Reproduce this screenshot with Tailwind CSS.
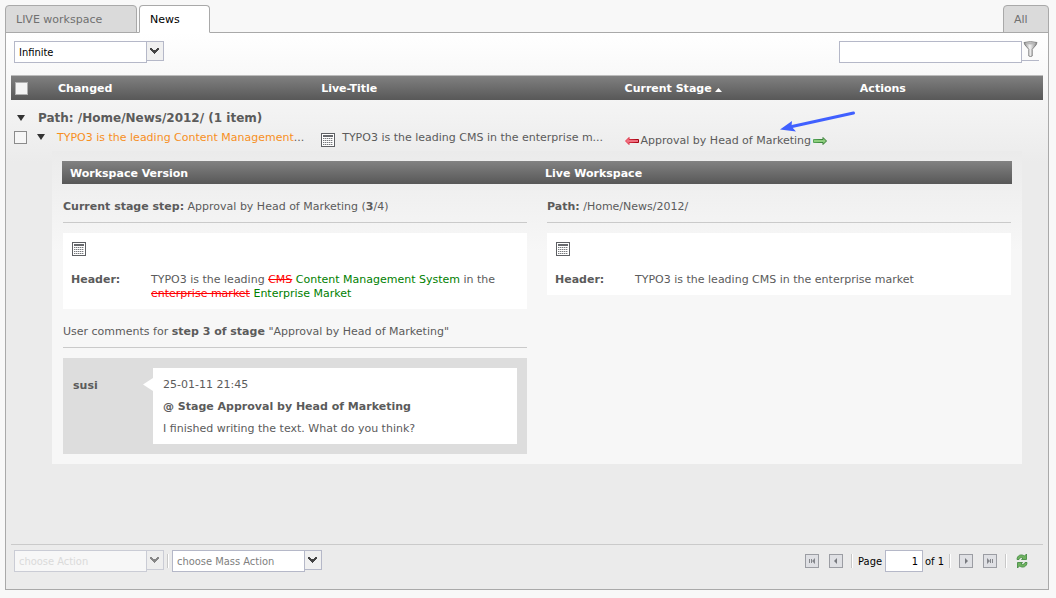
<!DOCTYPE html>
<html lang="en">
<head>
<meta charset="utf-8">
<title>Workspaces</title>
<script src="https://cdn.jsdelivr.net/npm/@tailwindcss/browser@4"></script>
</head>
<body class="min-h-screen flex flex-col bg-[#f8f8f8] pt-[5px] pl-[5px] pr-[7px] pb-2 font-['DejaVu_Sans',Verdana,sans-serif] text-[11px] leading-[14px] text-[#5b5b5b]">

<svg class="hidden" aria-hidden="true">
  <symbol id="record" viewBox="0 0 14 14">
    <rect x=".5" y=".5" width="13" height="13" fill="#fff" stroke="#5d5f63"/>
    <path d="M2 2.5h10M2 3.5h10" stroke="#686a6e"/>
    <path d="M2 5.5h10M2 7.5h10M2 9.5h10M2 11.5h10" stroke="#77797d" stroke-dasharray="1.4 .6"/>
  </symbol>
  <symbol id="chevron" viewBox="0 0 9 6">
    <path d="M0 0h2v1h1v1h3V1h1V0h2v2H8v1H7v1H6v1H5v1H4V5H3V4H2V3H1V2H0z" fill="currentColor"/>
  </symbol>
  <symbol id="caret" viewBox="0 0 8 6"><path d="M0 0h8L4 6z" fill="#333"/></symbol>
</svg>

<nav class="flex items-end gap-[2px] text-[#707070]" aria-label="Workspaces">
  <button class="h-7 w-[132px] rounded-t border border-[#a9a9a9] bg-[#dadada] pt-[2px] pl-[10px] text-left">LIVE workspace</button>
  <button class="relative z-10 h-7 w-[71px] rounded-t border border-[#a9a9a9] border-b-white bg-white pt-[2px] pl-[10px] text-left text-black">News</button>
  <button class="ml-auto h-7 w-[46px] rounded-t border border-[#a9a9a9] bg-[#dadada] pt-[2px] pl-[10px] text-left">All</button>
</nav>

<main class="relative -mt-px flex flex-1 flex-col border border-[#a9a9a9] bg-[#ebebeb] bg-[linear-gradient(#fff,#ebebeb_130px)] px-[5px] pb-[17px]">
  <div class="flex justify-between pt-2 pb-3 pl-[3px] pr-1 font-['DejaVu_Sans_Condensed',Tahoma,sans-serif]">
    <div class="flex items-start">
      <select aria-label="Depth" class="h-[22px] w-[133px] appearance-none border border-[#b5b8c8] bg-white px-1 pt-px text-black"><option>Infinite</option></select>
      <button aria-label="Open depth list" class="flex h-5 w-[17px] items-center justify-center border border-l-0 border-[#b5b8c8] bg-[#f0f0f0] pr-px text-[#444]"><svg class="h-[6px] w-[9px]"><use href="#chevron"/></svg></button>
    </div>
    <div class="flex items-start">
      <input type="text" aria-label="Filter" class="h-[22px] w-[183px] border border-[#b5b8c8] bg-white px-1 text-black">
      <button aria-label="Apply filter" class="flex h-5 w-[17px] items-start justify-center border-b border-[#b5b8c8]">
        <svg class="h-4 w-[15px]" viewBox="0 0 15 16">
          <defs><linearGradient id="metal"><stop stop-color="#8a8a8a"/><stop offset=".45" stop-color="#f4f4f4"/><stop offset="1" stop-color="#858585"/></linearGradient></defs>
          <path d="M1 1.500Q7.500-.2 14 1.500L13 4 9.200 8.300V15Q7.500 16 5.800 15V8.300L2 4z" fill="url(#metal)" stroke="#858585"/>
          <ellipse cx="7.500" cy="2.300" rx="4.800" ry="1.100" fill="#b8b8b8"/>
        </svg>
      </button>
    </div>
  </div>

  <table class="w-full table-fixed border-separate border-spacing-0 text-left">
    <colgroup><col class="w-[39px]"><col class="w-[25.5%]"><col class="w-[29.4%]"><col class="w-[22.8%]"><col></colgroup>
    <thead>
      <tr class="h-[25px] bg-linear-to-b from-[#828282] to-[#585858] text-white">
        <th class="border-t border-[#bcbcbc] p-0 pl-1 align-middle"><input type="checkbox" aria-label="Select all" class="block size-[13px] appearance-none border border-[#b0b0b0] bg-[#f4f4f4]"></th>
        <th class="border-t border-[#bcbcbc] px-2 pt-[2px] pb-0">Changed</th>
        <th class="border-t border-[#bcbcbc] px-2 pt-[2px] pb-0">Live-Title</th>
        <th class="border-t border-[#bcbcbc] px-2 pt-[2px] pb-0">Current Stage <svg class="inline-block h-1 w-[7px] align-[0px]" viewBox="0 0 7 4"><path d="M0 4h7L3.500 0z" fill="#fff"/></svg></th>
        <th class="border-t border-[#bcbcbc] px-2 pt-[2px] pb-0">Actions</th>
      </tr>
    </thead>
    <tbody>
      <tr class="h-[28px]">
        <th colspan="5" class="p-0 pt-2 pl-[6px]">
          <button class="flex items-center gap-[13px]"><svg class="h-[6px] w-2"><use href="#caret"/></svg><span class="text-xs leading-[14px] font-bold">Path: /Home/News/2012/ (1 item)</span></button>
        </th>
      </tr>
      <tr class="h-[23px] align-top">
        <td class="p-0 pt-[3px] pl-[3px]"><div class="flex items-start gap-[10px]"><input type="checkbox" aria-label="Select row" class="block size-[13px] shrink-0 appearance-none border border-[#8b8b8b] bg-[#f6f6f6]"><button aria-label="Collapse row" class="pt-[3px]"><svg class="block h-[6px] w-2"><use href="#caret"/></svg></button></div></td>
        <td class="p-0 pt-[3px] pl-[7px] whitespace-nowrap"><a href="#" class="text-[#f78f1e]">TYPO3 is the leading Content Management</a>...</td>
        <td class="p-0 pt-[3px] pl-2 whitespace-nowrap"><div class="flex items-start gap-[7px]"><svg class="mt-[2px] size-[14px] shrink-0"><use href="#record"/></svg><span>TYPO3 is the leading CMS in the enterprise m...</span></div></td>
        <td class="p-0 pt-[6px] pl-2"><div class="flex items-center gap-[2px] whitespace-nowrap">
          <button aria-label="Send to previous stage"><svg class="block h-2 w-[14px]" viewBox="0 0 14 8"><defs><linearGradient id="red"><stop stop-color="#f04055"/><stop offset="1" stop-color="#a00010"/></linearGradient></defs><path d="M.5 4 4 .5v2h9.500v3H4v2z" fill="#ee7080" stroke="url(#red)"/></svg></button>
          <span>Approval by Head of Marketing</span>
          <button aria-label="Send to next stage"><svg class="block h-2 w-[14px]" viewBox="0 0 14 8"><defs><linearGradient id="green"><stop stop-color="#58a858"/><stop offset="1" stop-color="#2b702b"/></linearGradient></defs><path d="M13.500 4 10 .5v2H.5v3H10v2z" fill="#8dce7d" stroke="url(#green)"/></svg></button>
        </div></td>
        <td></td>
      </tr>
      <tr>
        <td colspan="5" class="p-0 pr-[21px] pl-[41px]">
          <section class="bg-[linear-gradient(#ebebeb,#f7f7f7_100px)] p-[10px]">
            <div class="grid h-[23px] grid-cols-2 items-center bg-linear-to-b from-[#828282] to-[#585858] pt-[2px] font-bold text-white">
              <h2 class="px-2">Workspace Version</h2><h2 class="px-2">Live Workspace</h2>
            </div>
            <div class="grid grid-cols-2 items-start gap-5 px-px">
              <div>
                <p class="border-b border-[#cacaca] pt-4 pb-2"><b>Current stage step:</b> Approval by Head of Marketing (<b>3</b>/4)</p>
                <div class="mt-[10px] bg-white px-2 pt-[9px] pb-2">
                  <svg class="ml-px block size-[14px]"><use href="#record"/></svg>
                  <dl class="mt-[17px] flex"><dt class="w-20 shrink-0 font-bold">Header:</dt><dd>TYPO3 is the leading <del class="text-[#ff0000]">CMS</del> <ins class="text-[#008000] no-underline">Content Management System</ins> in the <del class="text-[#ff0000]">enterprise market</del> <ins class="text-[#008000] no-underline">Enterprise Market</ins></dd></dl>
                </div>
                <p class="border-b border-[#cacaca] pt-4 pb-2">User comments for <b>step 3 of stage</b> "Approval by Head of Marketing"</p>
                <article class="mt-[10px] flex bg-[#ddd] p-[10px]">
                  <b class="w-20 shrink-0 pt-[11px]">susi</b>
                  <div class="relative flex flex-1 flex-col gap-2 bg-white px-[10px] pt-[10px] pb-2">
                    <svg class="absolute top-[10px] -left-[10px] h-[13px] w-[10px]" viewBox="0 0 10 13"><path d="M10 0v13L0 6.500z" fill="#fff"/></svg>
                    <time>25-01-11 21:45</time>
                    <b>@ Stage Approval by Head of Marketing</b>
                    <p>I finished writing the text. What do you think?</p>
                  </div>
                </article>
              </div>
              <div>
                <p class="border-b border-[#cacaca] pt-4 pb-2"><b>Path:</b> /Home/News/2012/</p>
                <div class="mt-[10px] bg-white px-2 pt-[9px] pb-2">
                  <svg class="ml-px block size-[14px]"><use href="#record"/></svg>
                  <dl class="mt-[17px] flex"><dt class="w-20 shrink-0 font-bold">Header:</dt><dd>TYPO3 is the leading CMS in the enterprise market</dd></dl>
                </div>
              </div>
            </div>
          </section>
        </td>
      </tr>
    </tbody>
  </table>

  <svg class="pointer-events-none absolute top-[76px] right-[192px] h-6 w-[78px]" viewBox="0 0 78 24" aria-hidden="true">
    <path d="M75.500 4 14 17.500" stroke="#4060ff" stroke-width="3" stroke-linecap="round"/>
    <path d="M2 20.500 14 12l-.5 5.500 4.500 5z" fill="#4060ff"/>
  </svg>

  <footer class="mt-auto flex items-start border-t border-[#cacaca] pt-[5px] pr-[15px] pl-[3px] font-['DejaVu_Sans_Condensed',Tahoma,sans-serif] text-black">
    <div class="flex items-start opacity-60">
      <select disabled aria-label="Action" class="h-[22px] w-[133px] appearance-none border border-[#b5b8c8] bg-white px-1 pt-px text-[#d0d0d0] opacity-100"><option>choose Action</option></select>
      <button disabled aria-label="Open action list" class="flex h-5 w-[17px] items-center justify-center border border-l-0 border-[#b5b8c8] bg-[#f0f0f0] pr-px text-[#444]"><svg class="h-[6px] w-[9px]"><use href="#chevron"/></svg></button>
    </div>
    <span class="mx-[3px] mt-1 h-[14px] w-[2px] border-l border-[#c8c8c8] bg-white"></span>
    <div class="flex items-start">
      <select aria-label="Mass action" class="h-[22px] w-[133px] appearance-none border border-[#b5b8c8] bg-white px-1 pt-px text-[#808080]"><option>choose Mass Action</option></select>
      <button aria-label="Open mass action list" class="flex h-5 w-[17px] items-center justify-center border border-l-0 border-[#b5b8c8] bg-[#f0f0f0] pr-px text-[#444]"><svg class="h-[6px] w-[9px]"><use href="#chevron"/></svg></button>
    </div>
    <div class="ml-auto flex h-[22px] items-center">
      <button aria-label="First page" class="mr-[10px] size-[14px] border border-[#9b9da3] bg-[#dfe0e4]"><svg class="block size-3" viewBox="0 0 12 12"><path d="M3 4h1v4H3zM5 4h1v4H5zM9 3v6L6 6z" fill="#85878c"/></svg></button>
      <button aria-label="Previous page" class="mr-2 size-[14px] border border-[#9b9da3] bg-[#dfe0e4]"><svg class="block size-3" viewBox="0 0 12 12"><path d="M7 3v6L4 6z" fill="#77797e"/></svg></button>
      <span class="mr-[5px] h-[14px] w-[2px] border-l border-[#c8c8c8] bg-white"></span>
      <label for="page" class="mr-[3px] pt-[2px]">Page</label>
      <input id="page" type="text" value="1" class="mr-[2px] h-[22px] w-[38px] border border-[#b5b8c8] bg-white px-1 text-right">
      <span class="pt-[2px]">of 1</span>
      <span class="mr-2 ml-[5px] h-[14px] w-[2px] border-l border-[#c8c8c8] bg-white"></span>
      <button aria-label="Next page" class="mr-[10px] size-[14px] border border-[#9b9da3] bg-[#dfe0e4]"><svg class="block size-3" viewBox="0 0 12 12"><path d="M5 3v6l3-3z" fill="#77797e"/></svg></button>
      <button aria-label="Last page" class="mr-2 size-[14px] border border-[#9b9da3] bg-[#dfe0e4]"><svg class="block size-3" viewBox="0 0 12 12"><path d="M8 4h1v4H8zM6 4h1v4H6zM3 3v6l3-3z" fill="#85878c"/></svg></button>
      <span class="mr-[9px] h-[14px] w-[2px] border-l border-[#c8c8c8] bg-white"></span>
      <button aria-label="Refresh"><svg class="block h-4 w-3" viewBox="0 0 12 16"><path d="M1 6.500C1 2.500 5 .5 8.500 3l2-2v5.500H5.500L7 5C5 4 3.500 5 3 6.500zM11 9.500c0 4-4 6-7.500 3.500l-2 2V9.500h5L5 11c2 1 3.500 0 4-1.500z" fill="#6fb25f" stroke="#3c873c" stroke-width=".8"/></svg></button>
    </div>
  </footer>
</main>
</body>
</html>
